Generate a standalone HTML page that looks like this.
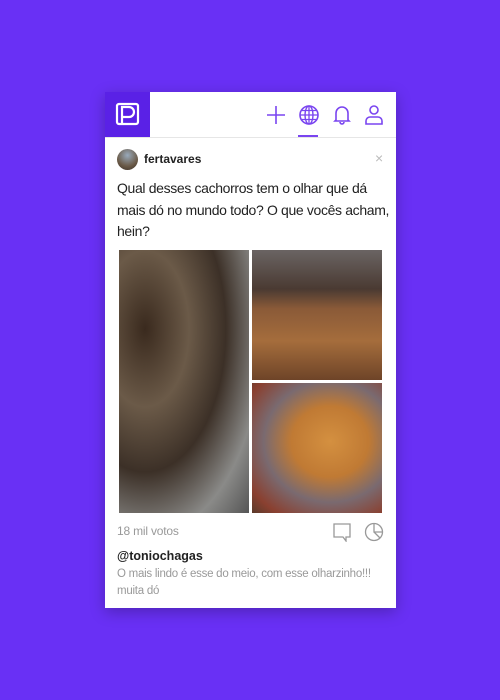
<!DOCTYPE html>
<html><head><style>
body{margin:0;width:500px;height:700px;background:#6930f5;font-family:"Liberation Sans",sans-serif;position:relative;overflow:hidden}
.card{position:absolute;left:105px;top:92px;width:291px;height:516px;background:#fff;box-shadow:0 4px 14px rgba(0,0,0,.25)}
.hdr{height:45px;border-bottom:1px solid #e6e6e6;position:relative}
.logo{position:absolute;left:0;top:0;width:45px;height:45px;background:#5a21e6}
.ic{position:absolute;top:12px}
.ul{position:absolute;left:193px;top:43px;width:20px;height:2px;background:#7a45f0}
.ab{position:absolute}
</style></head><body>
<div class="card">
<div class="hdr">
<div class="logo"><svg width="45" height="45"><rect x="12" y="12" width="21" height="20" rx="2" fill="none" stroke="#fff" stroke-width="2.2"/><path d="M17 15h7a5 5 0 0 1 0 10h-7zM17 25v8" fill="none" stroke="#fff" stroke-width="2.2"/></svg></div>
<svg class="ic" style="left:160px" width="22" height="22"><path d="M11 2v18M2 11h18" stroke="#7a45f0" stroke-width="1.6"/></svg>
<svg class="ic" style="left:193px" width="22" height="22"><circle cx="11" cy="11" r="9" fill="none" stroke="#7a45f0" stroke-width="1.6"/><ellipse cx="11" cy="11" rx="4" ry="9" fill="none" stroke="#7a45f0" stroke-width="1.4"/><path d="M2 11h18M11 2v18M4 6.5h14M4 15.5h14" stroke="#7a45f0" stroke-width="1.3"/></svg>
<svg class="ic" style="left:226px" width="22" height="22"><path d="M5 16V9a6 6 0 0 1 12 0v7l1 1H4z M9 18a2 2 0 0 0 4 0" fill="none" stroke="#7a45f0" stroke-width="1.6"/></svg>
<svg class="ic" style="left:258px" width="22" height="22"><circle cx="11" cy="6" r="4" fill="none" stroke="#7a45f0" stroke-width="1.6"/><path d="M3 20v-3a4 4 0 0 1 4-4h8a4 4 0 0 1 4 4v3z" fill="none" stroke="#7a45f0" stroke-width="1.6"/></svg>
<div class="ul"></div>
</div>
<div class="ab" style="left:12px;top:57px;width:21px;height:21px;border-radius:50%;background:radial-gradient(circle at 50% 30%,#9ab 0,#6a5a48 60%,#3a2e25)"></div>
<div class="ab" style="left:39px;top:60px;font-size:12px;font-weight:bold;color:#222">fertavares</div>
<div class="ab" style="left:270px;top:58px;font-size:14px;color:#bbb">×</div>
<div class="ab" style="left:12px;top:86px;width:278px;font-size:14px;letter-spacing:-0.35px;line-height:21.5px;color:#222">Qual desses cachorros tem o olhar que dá mais dó no mundo todo? O que vocês acham, hein?</div>
<div class="ab" style="left:14px;top:158px;width:130px;height:263px;background:radial-gradient(ellipse at 20% 30%,#3a2a1e 0,#6b5a48 30%,#3c3027 55%,#8a8a88 80%,#555 100%)"></div>
<div class="ab" style="left:147px;top:158px;width:130px;height:130px;background:linear-gradient(#6a6463 0,#4a3a32 30%,#8a5a38 45%,#a56d3c 70%,#6e4428 100%)"></div>
<div class="ab" style="left:147px;top:291px;width:130px;height:130px;background:radial-gradient(ellipse at 60% 45%,#d49040 0,#c07a34 35%,#7a6a70 60%,#8a4030 85%,#5a3a2a)"></div>
<div class="ab" style="left:12px;top:432px;font-size:12px;letter-spacing:-0.2px;color:#999">18 mil votos</div>
<svg class="ab" style="left:227px;top:430px" width="20" height="20"><path d="M2 2h16v13h-4v4l-3-4H2z" fill="none" stroke="#999" stroke-width="1.3"/></svg>
<svg class="ab" style="left:259px;top:430px" width="20" height="20"><circle cx="10" cy="10" r="8.5" fill="none" stroke="#999" stroke-width="1.3"/><path d="M10 1.5V10h8.5M10 10l6 6" fill="none" stroke="#999" stroke-width="1.3"/></svg>
<div class="ab" style="left:12px;top:457px;font-size:12.5px;font-weight:bold;color:#222">@toniochagas</div>
<div class="ab" style="left:12px;top:474px;width:276px;font-size:11.5px;letter-spacing:-0.25px;line-height:17px;color:#999">O mais lindo é esse do meio, com esse olharzinho!!! muita dó</div>
</div>
</body></html>
